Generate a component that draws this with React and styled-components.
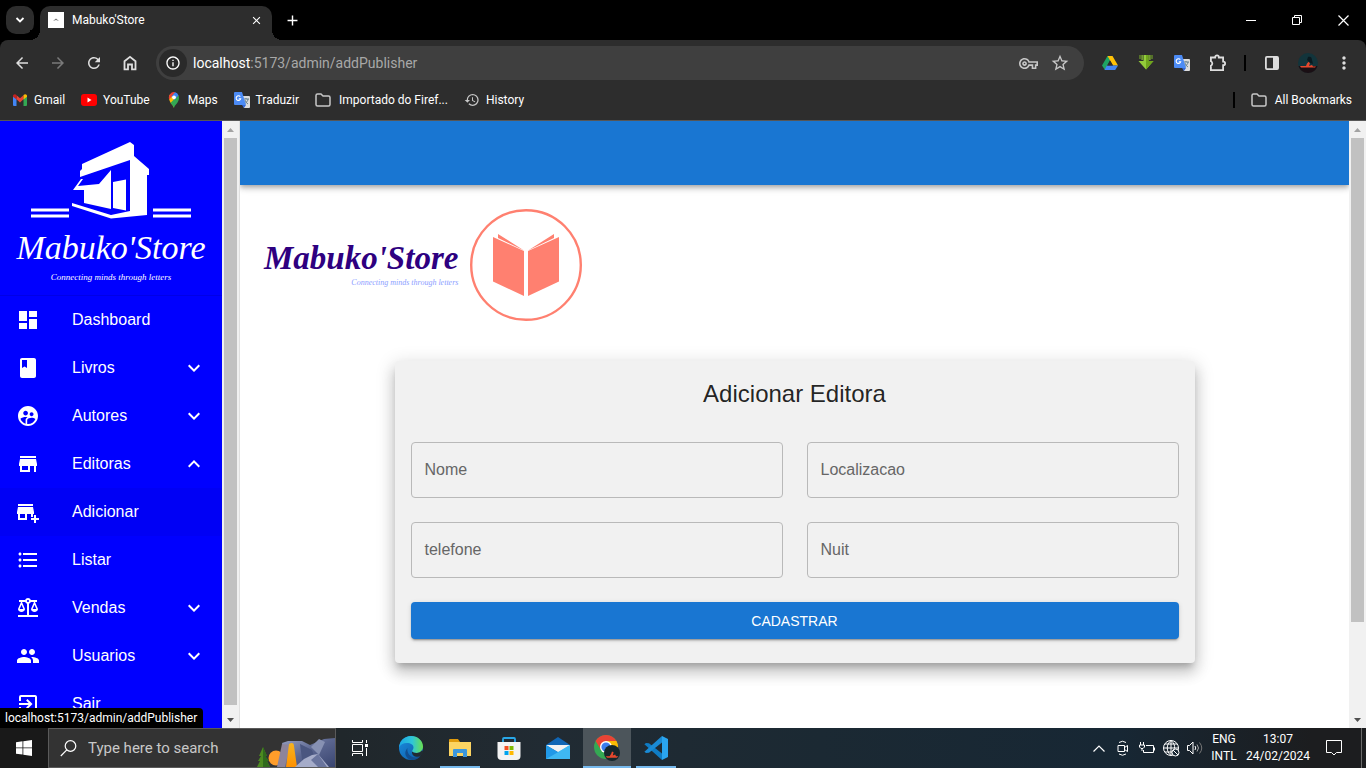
import React from "react";
import styled, { createGlobalStyle, css } from "styled-components";
import {
  MdDashboard, MdBook, MdSupervisedUserCircle, MdStore, MdAddBusiness,
  MdFormatListBulleted, MdBalance, MdPeople, MdExitToApp, MdExpandMore,
  MdExpandLess, MdArrowBack, MdArrowForward, MdRefresh, MdStarOutline,
  MdOutlineVpnKey, MdMoreVert, MdInfoOutline,
  MdHistory, MdClose, MdAdd,
} from "react-icons/md";

const GlobalStyle = createGlobalStyle`
  * { box-sizing: border-box; }
  body { margin: 0; background: #fff; }
  button { border: 0; padding: 0; background: none; color: inherit; font: inherit; cursor: pointer; }
  a { color: inherit; text-decoration: none; }
  svg { display: block; flex: none; }
`;

const ui = '"Segoe UI", Roboto, sans-serif';
const app = '"Liberation Sans", Arial, sans-serif';

const Screen = styled.div`
  display: flex;
  flex-direction: column;
  height: 100vh;
  overflow: hidden;
  font-family: ${ui};
  font-size: 12px;
  color: #fff;
`;

/* ---------- browser window ---------- */

const TabStrip = styled.div`
  display: flex;
  align-items: flex-start;
  height: 40px;
  padding: 6px 0 0 6px;
  background: #000;
  flex: none;
`;

const TabSearch = styled.button`
  display: grid;
  place-items: center;
  width: 28px;
  height: 28px;
  border-radius: 10px;
  background: #2d2d2d;
`;

const Tab = styled.div`
  position: relative;
  display: flex;
  align-items: center;
  gap: 8px;
  width: 232px;
  height: 34px;
  margin-left: 6px;
  padding: 0 8px 6px;
  border-radius: 10px 10px 0 0;
  background: #2d2d2d;

  &::before, &::after {
    content: "";
    position: absolute;
    bottom: 0;
    width: 10px;
    height: 10px;
  }
  &::before { left: -10px; background: radial-gradient(circle at 0 0, #000 10px, #2d2d2d 10px); }
  &::after { right: -10px; background: radial-gradient(circle at 100% 0, #000 10px, #2d2d2d 10px); }
`;

const TabTitle = styled.span`
  flex: 1;
`;

const TabClose = styled.button`
  display: grid;
  place-items: center;
  width: 16px;
  height: 16px;
`;

const NewTab = styled.button`
  display: grid;
  place-items: center;
  width: 28px;
  height: 28px;
  margin-left: 6px;
`;

const WindowControls = styled.div`
  display: flex;
  margin: -6px 0 0 auto;
`;

const WindowButton = styled.button`
  display: grid;
  place-items: center;
  width: 46px;
  height: 40px;
`;

const ChromeBars = styled.div`
  flex: none;
  background: #000;
`;

const Toolbar = styled.div`
  display: flex;
  align-items: center;
  height: 46px;
  padding: 0 4px;
  border-radius: 8px 8px 0 0;
  background: #2d2d2d;
  color: #dedede;
`;

const ToolButton = styled.button`
  display: grid;
  place-items: center;
  width: 36px;
  height: 34px;
  color: ${(p) => (p.$dim ? "#7a7a7a" : "inherit")};
`;

const Omnibox = styled.div`
  display: flex;
  align-items: center;
  flex: 1;
  height: 34px;
  margin: 0 8px;
  padding: 0 8px 0 3px;
  border-radius: 17px;
  background: #3f3f3f;
  color: #c7c7c7;
`;

const SiteInfo = styled.button`
  display: grid;
  place-items: center;
  width: 28px;
  height: 28px;
  border-radius: 50%;
  background: #2a2a2a;
  color: #fff;
`;

const Address = styled.span`
  flex: 1;
  margin-left: 6px;
  font-size: 14px;
  line-height: 20px;
  color: #a8a8a8;

  b { font-weight: 400; color: #fff; }
`;

const OmniButton = styled.button`
  display: grid;
  place-items: center;
  width: 32px;
  height: 28px;
`;

const BarDivider = styled.span`
  width: 2px;
  height: 16px;
  margin: 0 8px;
  background: #000;
`;

const Bookmarks = styled.nav`
  display: flex;
  align-items: center;
  gap: 16px;
  height: 35px;
  padding: 0 14px 6px 12px;
  border-bottom: 1px solid #565656;
  background: #2d2d2d;
`;

const Bookmark = styled.a`
  display: flex;
  align-items: center;
  gap: ${(p) => p.$gap || 6}px;
  white-space: nowrap;
`;

const AllBookmarks = styled.div`
  display: flex;
  align-items: center;
  gap: 8px;
  margin-left: auto;
`;

const Viewport = styled.div`
  position: relative;
  display: flex;
  flex: 1;
  min-height: 0;
  overflow: hidden;
  background: #fff;
  font-family: ${app};
`;

const StatusBubble = styled.div`
  position: absolute;
  left: 0;
  bottom: 0;
  height: 20px;
  padding: 0 6px 0 5px;
  border-radius: 0 4px 0 0;
  background: #000;
  font-family: ${ui};
  font-size: 12px;
  line-height: 20px;
`;

/* ---------- scroll bars ---------- */

const Track = styled.div`
  display: flex;
  flex-direction: column;
  align-items: center;
  flex: none;
  width: 17px;
  background: #f1f1f1;
`;

const ArrowBox = styled.span`
  display: grid;
  place-items: center;
  flex: none;
  height: 17px;
`;

const ThumbLane = styled.div`
  flex: 1;
  width: 13px;
`;

const Thumb = styled.div`
  width: 13px;
  height: ${(p) => p.$size}%;
  background: #c1c1c1;
`;

function ScrollBar({ size }) {
  return (
    <Track aria-hidden="true">
      <ArrowBox><svg width="7" height="4"><path d="M0 4 3.5 0 7 4z" fill="#a3a3a3" /></svg></ArrowBox>
      <ThumbLane><Thumb $size={size} /></ThumbLane>
      <ArrowBox><svg width="7" height="4"><path d="M0 0 3.5 4 7 0z" fill="#505050" /></svg></ArrowBox>
    </Track>
  );
}

/* ---------- side menu ---------- */

const Drawer = styled.aside`
  display: flex;
  flex: none;
  width: 240px;
  border-right: 1px solid #e0e0e0;
`;

const DrawerBody = styled.div`
  flex: 1;
  overflow: hidden;
  background: #0000ff;
`;

const Brand = styled.div`
  display: flex;
  flex-direction: column;
  align-items: center;
  height: 175px;
  padding-top: 20px;
  border-bottom: 1px solid #0000e6;
  font-family: "Liberation Serif", serif;
  font-style: italic;
  text-align: center;
`;

const BrandName = styled.div`
  margin-top: 4px;
  font-size: 34px;
  line-height: 46px;
`;

const BrandTag = styled.div`
  font-size: 9px;
  line-height: 12px;
`;

const Menu = styled.nav`
  display: flex;
  flex-direction: column;
`;

const MenuItem = styled.a`
  display: flex;
  align-items: center;
  height: 48px;
  padding: 0 16px;
  font-size: 16px;
  line-height: 24px;
  background: ${(p) => (p.$active ? "#0000f5" : "transparent")};
`;

const MenuLabel = styled.span`
  flex: 1;
  margin-left: 32px;
`;

const menu = [
  { label: "Dashboard", icon: MdDashboard },
  { label: "Livros", icon: MdBook, arrow: MdExpandMore },
  { label: "Autores", icon: MdSupervisedUserCircle, arrow: MdExpandMore },
  { label: "Editoras", icon: MdStore, arrow: MdExpandLess },
  { label: "Adicionar", icon: MdAddBusiness, active: true },
  { label: "Listar", icon: MdFormatListBulleted },
  { label: "Vendas", icon: MdBalance, arrow: MdExpandMore },
  { label: "Usuarios", icon: MdPeople, arrow: MdExpandMore },
  { label: "Sair", icon: MdExitToApp },
];

function StoreArt() {
  return (
    <svg width="160" height="80" viewBox="0 0 160 80" fill="#fff">
      <path d="M51 23 99 1l4 3v11l15 13v6h-2v40l-36 3.500-39-12.500v-3l39 12 19-4V19L49 36v-6l2-2z" />
      <path d="m50 38-8 11h11v13l27 6V29L68 43l-21 2 5-7z" />
      <path d="M82 41 95 38.500v31L82 67z" />
      <path d="M0 67.500h38v3H0zM0 73.500h38v3H0zM122 67.500h38v3h-38zM122 73.500h38v3h-38z" />
    </svg>
  );
}

/* ---------- page ---------- */

const Main = styled.main`
  flex: 1;
  min-width: 0;
  overflow: hidden;
`;

const AppBar = styled.header`
  height: 64px;
  background: #1976d2;
  box-shadow: 0 2px 4px -1px rgba(0,0,0,.2), 0 4px 5px 0 rgba(0,0,0,.14), 0 1px 10px 0 rgba(0,0,0,.12);
`;

const Page = styled.div`
  padding: 24px;
`;

const Logo = styled.div`
  display: flex;
  align-items: center;
  gap: 12px;
  margin-bottom: 40px;
  font-family: "Liberation Serif", serif;
  font-style: italic;
`;

const LogoText = styled.div`
  display: flex;
  flex-direction: column;
  align-items: flex-end;
`;

const LogoName = styled.div`
  font-size: 33px;
  line-height: 36px;
  font-weight: 700;
  color: #2e0080;
`;

const LogoTag = styled.div`
  font-size: 8px;
  line-height: 14px;
  color: #8c9eff;
`;

const Card = styled.form`
  max-width: 800px;
  margin: 0 auto;
  padding: 16px 16px 24px;
  border-radius: 4px;
  background: #f1f1f1;
  color: rgba(0,0,0,.87);
  box-shadow: 0 6px 6px -3px rgba(0,0,0,.2), 0 10px 14px 1px rgba(0,0,0,.14), 0 4px 18px 3px rgba(0,0,0,.12);
`;

const Title = styled.h1`
  margin: 0 0 32px;
  font-size: 24px;
  line-height: 33px;
  font-weight: 400;
  text-align: center;
`;

const Fields = styled.div`
  display: grid;
  grid-template-columns: 1fr 1fr;
  gap: 24px;
`;

const Field = styled.div`
  position: relative;
  display: grid;
`;

const floated = css`
  top: -8px;
  font-size: 12px;
  line-height: 16px;
  background: #f1f1f1;
`;

const Input = styled.input`
  width: 100%;
  height: 56px;
  padding: 0 13px;
  border: 1px solid #b9b9b9;
  border-radius: 4px;
  background: transparent;
  font: 16px ${app};
  color: rgba(0,0,0,.87);
  outline: none;

  &:focus { border-color: #1976d2; }
  &:focus + label, &:not(:placeholder-shown) + label { ${floated} }
`;

const Label = styled.label`
  position: absolute;
  left: 14px;
  top: 16px;
  font-size: 16px;
  line-height: 24px;
  color: #666;
  pointer-events: none;
`;

const Submit = styled.button`
  width: 100%;
  height: 37px;
  margin-top: 24px;
  border-radius: 4px;
  background: #1976d2;
  color: #fff;
  font-size: 14px;
  text-transform: uppercase;
  box-shadow: 0 3px 1px -2px rgba(0,0,0,.2), 0 2px 2px 0 rgba(0,0,0,.14), 0 1px 5px 0 rgba(0,0,0,.12);
`;

const fields = [
  ["nome", "Nome"],
  ["localizacao", "Localizacao"],
  ["telefone", "telefone"],
  ["nuit", "Nuit"],
];

/* ---------- taskbar ---------- */

const Taskbar = styled.footer`
  display: flex;
  flex: none;
  height: 40px;
  background: linear-gradient(90deg, #1c1c1c 0, #20272b 25%, #212b33 40%, #1b2933 60%, #172734 82%, #1c1d1f 96%);
`;

const Start = styled.button`
  display: grid;
  place-items: center;
  width: 48px;
  height: 40px;
  background: #191919;
`;

const Search = styled.label`
  display: flex;
  align-items: center;
  width: 288px;
  border: 1px solid #5a5a5a;
  background: #333;
  padding-left: 11px;
`;

const SearchInput = styled.input`
  flex: 1;
  min-width: 0;
  margin-left: 11px;
  padding: 0;
  border: 0;
  outline: 0;
  background: none;
  color: #ddd;
  font: 15px ${ui};

  &::placeholder { color: #c8c8c8; opacity: 1; }
`;

const TaskButtons = styled.div`
  display: flex;
  gap: 1px;
  margin-left: 3px;
`;

const TaskButton = styled.button`
  display: grid;
  place-items: center;
  width: 48px;
  height: 40px;
  background: ${(p) => (p.$current ? "#4c555b" : "transparent")};
  box-shadow: ${(p) => (p.$current ? "inset 0 -2px #76b9ed" : "none")};
  ${(p) => p.$open && css`
    background: linear-gradient(#76b9ed, #76b9ed) 50% 100% / 40px 2px no-repeat;
  `}
`;

const Tray = styled.div`
  display: flex;
  align-items: center;
  margin-left: auto;
`;

const TrayButton = styled.button`
  display: grid;
  place-items: center;
  width: 24px;
  height: 40px;
`;

const TrayText = styled.button`
  width: ${(p) => p.$width}px;
  font-size: 12px;
  line-height: 17px;
  text-align: center;
  white-space: nowrap;
`;

const Notify = styled.button`
  display: grid;
  place-items: center;
  width: 38px;
  height: 40px;
`;

const Peek = styled.button`
  width: 5px;
  height: 40px;
  margin-left: 8px;
  border-left: 1px solid #6a6a6a;
`;

/* ---------- drawings ---------- */

const Translate = () => (
  <svg width="16" height="16" viewBox="0 0 16 16">
    <path d="M6 4h9a1 1 0 0 1 1 1v10a1 1 0 0 1-1 1h-5z" fill="#dcdcdc" />
    <path d="M9 7h6M12 6v1M14 7c0 2-2 4-4 5M11 8c0 2 2 3 3 4" stroke="#607d8b" fill="none" />
    <path d="M1 0h7l4 13H1a1 1 0 0 1-1-1V1a1 1 0 0 1 1-1z" fill="#4c8bf5" />
    <path d="m8 13 4 0-2 3z" fill="#3367d6" />
    <path d="M6.300 4.700a2.300 2.300 0 1 0 .4 2H4.800" stroke="#fff" strokeWidth="1.100" fill="none" />
  </svg>
);

const Folder = () => (
  <svg width="16" height="14" viewBox="0 0 16 14" fill="none" stroke="#c7c7c7" strokeWidth="1.500">
    <path d="M1 2.500A1.500 1.500 0 0 1 2.500 1H6l2 2h5.500A1.500 1.500 0 0 1 15 4.500v7a1.500 1.500 0 0 1-1.500 1.500h-11A1.500 1.500 0 0 1 1 11.500z" />
  </svg>
);

const Gmail = () => (
  <svg width="16" height="12" viewBox="-1 0 16 12">
    <path d="M0 2v9a1 1 0 0 0 1 1h2.500V4z" fill="#4285f4" />
    <path d="M14 2v9a1 1 0 0 1-1 1h-2.500V4z" fill="#34a853" />
    <path d="M3.500 1.200 7 4.300l3.500-3.100V5.300L7 8.500 3.500 5.300z" fill="#ea4335" />
    <path d="M0 2C0 .2 2-.5 3.500.9v4.500L0 2.800z" fill="#c5221f" />
    <path d="M14 2C14 .2 12-.5 10.500.9v4.500L14 2.800z" fill="#fbbc04" />
  </svg>
);

const YouTube = () => (
  <svg width="16" height="12" viewBox="0 0 16 12">
    <rect width="16" height="12" rx="3" fill="#f00" />
    <path d="m6.500 3.500 4 2.500-4 2.500z" fill="#fff" />
  </svg>
);

const MapsPin = () => (
  <svg width="16" height="16" viewBox="0 0 16 16">
    <path d="M8 16c-.5-3-5-5-5-10.500A5.200 5.200 0 0 1 4.200 2L8 5.500z" fill="#fbbc04" />
    <path d="M8 16c.5-3 5-5 5-10.500A5 5 0 0 0 12.200 3L4.500 11C6 13 7.500 14 8 16z" fill="#34a853" />
    <path d="M4 2.200A5 5 0 0 1 9.500.3L3.200 7.500A5.500 5.500 0 0 1 4 2.200z" fill="#ea4335" />
    <path d="M9 .2a5 5 0 0 1 3.500 3L8.500 8 5.500 4.500z" fill="#4285f4" />
    <circle cx="8" cy="5.300" r="1.900" fill="#fff" />
  </svg>
);

const Drive = () => (
  <svg width="16" height="14" viewBox="0 0 16 14">
    <path d="M5.500 0h5L8 4.500 3 14 0 9.500z" fill="#1ea362" />
    <path d="M5.500 0h5L16 9.500h-5z" fill="#ffc107" />
    <path d="M4.800 9.500H16L13.200 14H2.500z" fill="#4285f4" />
    <path d="m8 4.600 3 4.900H5.100z" fill="#2d2d2d" />
  </svg>
);

const Download = () => (
  <svg width="16" height="16" viewBox="0 0 16 16">
    <path d="M1.500 0h1v4h-1zM13.500 0h1v4h-1z" fill="#7cb327" />
    <path d="M3.500 0h1.200v5H3.500zM11.300 0h1.200v5h-1.200z" fill="#8fca35" />
    <path d="M5.500 0h5v6h5L8 14.500.5 6h5z" fill="#93cc3a" />
    <path d="M8 0h2.500v6h5L8 14.500z" fill="#6fa51d" />
  </svg>
);

const Puzzle = () => (
  <svg width="18" height="18" viewBox="0 0 18 18" fill="none" stroke="currentColor" strokeWidth="1.800">
    <path d="M1.900 3.500h4.300v-.3a1.800 1.800 0 0 1 3.600 0v.3h4.300v4.200h.3a1.700 1.700 0 0 1 0 3.400h-.3v5.000H1.900v-4.300a2.500 2.500 0 0 0 0-4.500z" />
  </svg>
);

const Avatar = ({ size = 20 }) => (
  <svg width={size} height={size} viewBox="0 0 20 20">
    <circle cx="10" cy="10" r="10" fill="#12343b" />
    <path d="M.5 13h19A10 10 0 0 1 .5 13z" fill="#1a0f14" />
    <path d="M2 13h6l1-2.500 2-2 1 1.500-1 3 3-1 1 1.500h3l-1 1H3z" fill="#e5482d" />
    <path d="M10 4c2-1 4 0 4 3l1 4-3-1-3-3z" fill="#0a1a20" />
  </svg>
);

const Home = () => (
  <svg width="14" height="16" viewBox="0 0 14 16" fill="none" stroke="currentColor" strokeWidth="1.800">
    <path d="M1.500 6.300 7 1.800l5.500 4.500v8H9V9.500H5v4.800H1.500z" />
  </svg>
);

const SidePanel = () => (
  <svg width="16" height="16" viewBox="0 0 16 16">
    <rect x="1.900" y="1.900" width="12.200" height="12.200" rx="1" fill="none" stroke="currentColor" strokeWidth="1.800" />
    <path d="M9 2h5v12H9z" fill="currentColor" />
  </svg>
);

const Book = () => (
  <svg width="112" height="112" viewBox="0 0 112 112" fill="#ff8070">
    <circle cx="56" cy="56" r="54.800" fill="none" stroke="#ff8070" strokeWidth="2.400" />
    <path d="m23 28 31 14v45L23 72.500zM89 28 58 42v45l31-14.500z" />
    <path d="m28 25 26 16.500L28 29zM84 25 58 41.500 84 29z" />
  </svg>
);

const Scenery = () => (
  <svg width="78" height="38" viewBox="0 0 78 38">
    <defs>
      <linearGradient id="rock" x1="0" x2="1" y2="1"><stop stopColor="#9aa3c4" /><stop offset=".5" stopColor="#5b6690" /><stop offset="1" stopColor="#394570" /></linearGradient>
      <linearGradient id="fall" y1="0" x2="0" y2="1"><stop stopColor="#f5b420" /><stop offset="1" stopColor="#ff9100" /></linearGradient>
    </defs>
    <circle cx="19" cy="29" r="7.500" fill="#ff9d2a" />
    <path d="m25 14 6-2h14l8 4 14-6 11-1v29H22l5-17z" fill="url(#rock)" />
    <path d="m43 15 12 6 6 17H46z" fill="#4a5680" />
    <path d="m54 18 8-8 6 3-6 13z" fill="#8791b3" />
    <path d="m25 15 8 1-5 22h-8z" fill="#8d849b" />
    <path d="M32 15c3-2 5-1 5 2l3 21H29z" fill="url(#fall)" />
    <path d="m38 38 9-8 8-4 6-1 11 13z" fill="#a5acc9" />
    <path d="m54 31 7 7h9l-9-13z" fill="#69749d" />
    <path d="M0 38 3 32H1l3-5H2l4-9 4 9H8l4 5h-2l3 6z" fill="#4c8a20" />
    <path d="M6 18 10 27H8l4 5h-2l3 6H6z" fill="#2f6a1c" />
  </svg>
);

const Edge = () => (
  <svg width="24" height="24" viewBox="0 0 24 24">
    <defs>
      <linearGradient id="edgeTop" x1="0" x2="1"><stop stopColor="#1ba7e5" /><stop offset=".55" stopColor="#2fc6d8" /><stop offset="1" stopColor="#6ae04e" /></linearGradient>
      <linearGradient id="edgeLow" x1="0" x2="1" y2="1"><stop stopColor="#1b8ee0" /><stop offset="1" stopColor="#0c59a4" /></linearGradient>
    </defs>
    <circle cx="12" cy="12" r="12" fill="url(#edgeLow)" />
    <path d="M0 11.500C.5 5 5.500 0 12 0c7 0 12 5 12 10.500 0 4-3 6.500-6.500 6.500-3 0-4.500-1-4.500-2 0-.8 1.500-1.300 1.500-3.500C14.500 8.500 11.500 7 8 7c-4 0-7 2-8 4.500z" fill="url(#edgeTop)" />
    <path d="M8.500 12c-1 5 3 9.500 8 9.500 2 0 4-.8 5.300-2-1.800 3-5.200 4.500-9 4.500C7 23 4 17 8.500 12z" fill="#124f91" />
    <path d="M13.500 14.200c-.8.800-.6 2.800 4 2.800 2 0 4-.8 5.500-2.500l1.500 1.500-2.500 3.400c-1 .8-3 1.600-5 1.300-3-.4-5-3-3.500-6.500z" fill="#222b32" />
  </svg>
);

const Explorer = () => (
  <svg width="22" height="18" viewBox="0 0 22 18">
    <path d="M0 1a1 1 0 0 1 1-1h8l2 3h10v4H0z" fill="#e09b0c" />
    <path d="M0 3h22v14H0z" fill="#fcd462" />
    <path d="M4 18v-7a1 1 0 0 1 1-1h12a1 1 0 0 1 1 1v7h-4v-4H8v4z" fill="#3d97dc" />
  </svg>
);

const Store = () => (
  <svg width="24" height="24" viewBox="0 0 24 24">
    <path d="M6 7V3a1 1 0 0 1 1-1h10a1 1 0 0 1 1 1v4" fill="none" stroke="#29a8e8" strokeWidth="1.800" />
    <path d="M.5 6h23v14a4 4 0 0 1-4 4h-15a4 4 0 0 1-4-4z" fill="#f3f3f3" />
    <path d="M7.500 10h4v4h-4z" fill="#f25022" /><path d="M12.500 10h4v4h-4z" fill="#7fba00" />
    <path d="M7.500 15h4v4h-4z" fill="#00a4ef" /><path d="M12.500 15h4v4h-4z" fill="#ffb900" />
  </svg>
);

const Mail = () => (
  <svg width="24" height="22" viewBox="0 0 24 22">
    <path d="M0 8 12 0l12 8v4H0z" fill="#1066b5" />
    <path d="M0 8h24l-11 8z" fill="#f2f2f2" />
    <path d="M24 8v14H0z" fill="#4cc4f7" />
    <path d="M0 8v14h24z" fill="#2199e8" />
    <path d="m0 22 12.500-7L24 8v14z" fill="#3fb8f3" />
  </svg>
);

const Chrome = () => (
  <svg width="26" height="26" viewBox="0 0 26 26">
    <circle cx="12" cy="12" r="12" fill="#34a853" />
    <path d="M1.600 6A12 12 0 0 1 22.400 6L24 12H12L7 15z" fill="#ea4335" />
    <path d="M12 6h10.400A12 12 0 0 1 12 24l5-9z" fill="#fbbc04" />
    <circle cx="12" cy="12" r="6" fill="#fff" /><circle cx="12" cy="12" r="4.600" fill="#3b7ded" />
    <g transform="translate(10 10) scale(.8)"><circle cx="10" cy="10" r="10" fill="#15272c" /><path d="M2 14h5l2-3 1-3 2 1-1 4 3-1 1 2h3l-2 2H4z" fill="#e5482d" /></g>
  </svg>
);

const VsCode = () => (
  <svg width="24" height="24" viewBox="0 0 24 24">
    <path d="M.4 8.300 2 6.900 5 7.200 18 17.500V24z" fill="#0f7cc4" />
    <path d="M.4 15.700 2 17.100 5 16.800 18 6.500V0z" fill="#1a8ad4" />
    <path d="M18 0 24 3v18l-6 3z" fill="#2aa5f0" />
  </svg>
);

const line = { fill: "none", stroke: "#fff" };

const apps = [
  ["Microsoft Edge", Edge],
  ["File Explorer", Explorer, "open"],
  ["Microsoft Store", Store],
  ["Mail", Mail],
  ["Google Chrome", Chrome, "current"],
  ["Visual Studio Code", VsCode, "open"],
];

export default function App() {
  return (
    <Screen>
      <GlobalStyle />
      <TabStrip>
        <TabSearch aria-label="Search tabs">
          <svg width="10" height="6" viewBox="0 0 10 6" {...line} strokeWidth="1.800"><path d="m1.500 1 3.500 3.500L8.500 1" /></svg>
        </TabSearch>
        <Tab>
          <svg width="16" height="16"><path d="M0 0h16v16H0z" fill="#fff" /><path d="m5 9 3-2.500L11 9l-3-1z" fill="#777" /></svg>
          <TabTitle>Mabuko'Store</TabTitle>
          <TabClose aria-label="Close tab"><MdClose size={13} /></TabClose>
        </Tab>
        <NewTab aria-label="New tab"><MdAdd size={17} /></NewTab>
        <WindowControls>
          <WindowButton aria-label="Minimize"><svg width="10" height="1"><path d="M0 0h10v1H0z" fill="#fff" /></svg></WindowButton>
          <WindowButton aria-label="Restore"><svg width="10" height="10" {...line}><path d="M.5 2.500h7v7h-7zM2.500 2.500v-2h7v7h-2" /></svg></WindowButton>
          <WindowButton aria-label="Close"><svg width="11" height="11" {...line} strokeWidth="1.200"><path d="m.5.5 10 10M10.500.5l-10 10" /></svg></WindowButton>
        </WindowControls>
      </TabStrip>

      <ChromeBars>
        <Toolbar>
          <ToolButton aria-label="Back"><MdArrowBack size={18} /></ToolButton>
          <ToolButton aria-label="Forward" $dim><MdArrowForward size={18} /></ToolButton>
          <ToolButton aria-label="Reload"><MdRefresh size={18} /></ToolButton>
          <ToolButton aria-label="Home"><Home /></ToolButton>
          <Omnibox>
            <SiteInfo aria-label="Site information"><MdInfoOutline size={16} /></SiteInfo>
            <Address><b>localhost</b>:5173/admin/addPublisher</Address>
            <OmniButton aria-label="Passwords"><MdOutlineVpnKey size={19} /></OmniButton>
            <OmniButton aria-label="Bookmark this tab"><MdStarOutline size={20} /></OmniButton>
          </Omnibox>
          <ToolButton aria-label="Drive"><Drive /></ToolButton>
          <ToolButton aria-label="Downloads"><Download /></ToolButton>
          <ToolButton aria-label="Translate"><Translate /></ToolButton>
          <ToolButton aria-label="Extensions"><Puzzle /></ToolButton>
          <BarDivider />
          <ToolButton aria-label="Side panel"><SidePanel /></ToolButton>
          <ToolButton aria-label="Profile"><Avatar /></ToolButton>
          <ToolButton aria-label="Menu"><MdMoreVert size={20} /></ToolButton>
        </Toolbar>
        <Bookmarks>
          <Bookmark href="#gmail"><Gmail />Gmail</Bookmark>
          <Bookmark href="#youtube"><YouTube />YouTube</Bookmark>
          <Bookmark href="#maps"><MapsPin />Maps</Bookmark>
          <Bookmark href="#traduzir"><Translate />Traduzir</Bookmark>
          <Bookmark href="#importado" $gap={8}><Folder />Importado do Firef...</Bookmark>
          <Bookmark href="#history"><MdHistory size={16} color="#c7c7c7" />History</Bookmark>
          <AllBookmarks>
            <BarDivider />
            <Bookmark href="#all" $gap={8}><Folder />All Bookmarks</Bookmark>
          </AllBookmarks>
        </Bookmarks>
      </ChromeBars>

      <Viewport>
        <Drawer>
          <DrawerBody>
            <Brand>
              <StoreArt />
              <BrandName>Mabuko'Store</BrandName>
              <BrandTag>Connecting minds through letters</BrandTag>
            </Brand>
            <Menu>
              {menu.map(({ label, icon: Icon, arrow: Arrow, active }) => (
                <MenuItem key={label} href={"#" + label} $active={active}>
                  <Icon size={24} />
                  <MenuLabel>{label}</MenuLabel>
                  {Arrow && <Arrow size={24} />}
                </MenuItem>
              ))}
            </Menu>
          </DrawerBody>
          <ScrollBar size={99} />
        </Drawer>
        <Main>
          <AppBar />
          <Page>
            <Logo>
              <LogoText>
                <LogoName>Mabuko'Store</LogoName>
                <LogoTag>Connecting minds through letters</LogoTag>
              </LogoText>
              <Book />
            </Logo>
            <Card onSubmit={(e) => e.preventDefault()}>
              <Title>Adicionar Editora</Title>
              <Fields>
                {fields.map(([id, label]) => (
                  <Field key={id}>
                    <Input id={id} name={id} placeholder=" " />
                    <Label htmlFor={id}>{label}</Label>
                  </Field>
                ))}
              </Fields>
              <Submit type="submit">Cadastrar</Submit>
            </Card>
          </Page>
        </Main>
        <ScrollBar size={84.5} />
        <StatusBubble>localhost:5173/admin/addPublisher</StatusBubble>
      </Viewport>

      <Taskbar>
        <Start aria-label="Start">
          <svg width="16" height="16" viewBox="0 0 16 16" fill="#fff"><path d="m0 2.200 6.500-.9v6.200H0zM7.300 1.200 16 0v7.500H7.300zM0 8.300h6.500v6.300L0 13.700zM7.300 8.300H16V16l-8.700-1.200z" /></svg>
        </Start>
        <Search>
          <svg width="17" height="17" viewBox="0 0 17 17" {...line} strokeWidth="1.200"><circle cx="10.500" cy="6" r="5.300" /><path d="M6.800 9.800.8 16" /></svg>
          <SearchInput aria-label="Search" placeholder="Type here to search" />
          <Scenery />
        </Search>
        <TaskButton aria-label="Task view">
          <svg width="17" height="16" viewBox="0 0 17 16" {...line}><path d="M.5 0v2.500h10V0M.5 16v-2.500h10V16M.5 4.500h10v7H.5zM14.500 0v3M14.500 8v8" /><path d="M13 4h3v3h-3z" fill="#fff" stroke="none" /></svg>
        </TaskButton>
        <TaskButtons>
          {apps.map(([name, Icon, state]) => (
            <TaskButton key={name} aria-label={name} $open={state === "open"} $current={state === "current"}><Icon /></TaskButton>
          ))}
        </TaskButtons>
        <Tray>
          <TrayButton aria-label="Show hidden icons"><svg width="12" height="7" {...line} strokeWidth="1.200"><path d="m.5 6.500 5.500-5.500 5.500 5.500" /></svg></TrayButton>
          <TrayButton aria-label="Meet now"><svg width="12" height="16" {...line}><path d="M1 5.500h6.500v6H1zM7.500 7.500l3-2v6l-3-2M2 2.500q3.500-2.500 7 0M2 14q3.500 2.500 7 0" /></svg></TrayButton>
          <TrayButton aria-label="Battery"><svg width="17" height="12" {...line}><path d="M7 3.500h7.500v7h-10V8M15.500 5.500v3M1.500 0v3M4.500 0v3M.5 3h5v2L4 6.500H2L.5 5zM3 6.500V9" /></svg></TrayButton>
          <TrayButton aria-label="Network"><svg width="17" height="17" {...line}><circle cx="8" cy="8" r="7.500" /><path d="M8 .5v15M.5 8h15M2 4h12M2 12h7M8 .5c-5 4-5 11 0 15M8 .5c3 2.500 4 5 3.500 8" /><circle cx="12.500" cy="12.500" r="3.500" fill="#182733" /><path d="m10 10 5 5" /></svg></TrayButton>
          <TrayButton aria-label="Volume"><svg width="17" height="14" {...line}><path d="M.5 4.500h2L6 1v12L2.500 9.500h-2zM8 5q1.500 2 0 4" /><path d="M10 3.500q3 3.500 0 7" stroke="#aaa" /><path d="M12.500 1.500q4.500 5.500 0 11" stroke="#777" /></svg></TrayButton>
          <TrayText $width={34}>ENG<br />INTL</TrayText>
          <TrayText $width={74}>13:07<br />24/02/2024</TrayText>
          <Notify aria-label="Notifications"><svg width="17" height="16" {...line}><path d="M.5.500h15v12h-5L8 15l-2.500-2.500h-5z" /></svg></Notify>
          <Peek aria-label="Show desktop" />
        </Tray>
      </Taskbar>
    </Screen>
  );
}
